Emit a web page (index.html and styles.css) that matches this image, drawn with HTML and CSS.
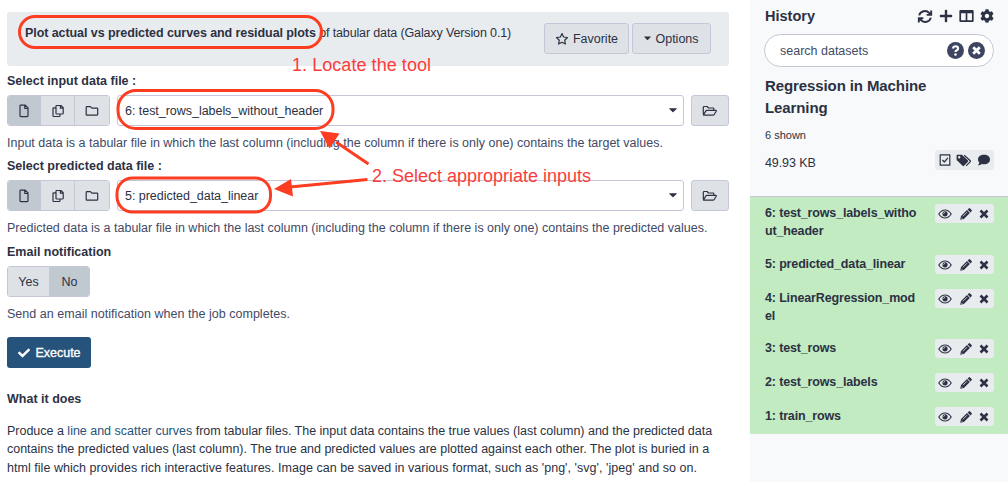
FILE: index.html
```html
<!DOCTYPE html>
<html lang="en">
<head>
<meta charset="utf-8">
<title>Galaxy</title>
<link rel="stylesheet" href="styles.css">
</head>
<body>
<svg class="defs" width="0" height="0">
  <symbol id="file" viewBox="0 0 12 14"><path class="line" d="M2.2 1.2H7.2L10 4V11.8Q10 12.6 9.2 12.6H2.8Q2 12.6 2 11.8V1.9Q2 1.2 2.8 1.2M6.8 1.4V4.5H9.9"/></symbol>
  <symbol id="copy" viewBox="0 0 14 14"><path class="line" d="M5.7 1.5H10L12.2 3.6V9.2Q12.2 10 11.4 10H5.7Q5 10 5 9.2V2.2Q5 1.5 5.7 1.5M9.4 1.5V4.2H12.2M4.8 3.9H2.7Q2 3.9 2 4.6V11.8Q2 12.5 2.7 12.5H8.2Q9 12.5 9 11.8V10.2"/></symbol>
  <symbol id="folder" viewBox="0 0 14 12"><path class="line" d="M2 1.6H5.4L6.9 3.1H11.9Q12.7 3.1 12.7 3.9V9.4Q12.7 10.2 11.9 10.2H2Q1.2 10.2 1.2 9.4V2.4Q1.2 1.6 2 1.6Z"/></symbol>
  <symbol id="folder-open" viewBox="0 0 16 12"><path class="line" d="M1.3 9.2V2.3Q1.3 1.5 2.1 1.5H5.1L6.5 3H11Q11.8 3 11.8 3.8V5.3M1.6 9.7L3.9 5.9Q4.3 5.3 5 5.3H13.7Q14.7 5.3 14.2 6.2L12.2 9.5Q11.8 10.2 11 10.2H2Q1.3 10.2 1.6 9.7Z"/></symbol>
  <symbol id="star" viewBox="0 0 14 14"><path class="line" d="M7 1.5L8.6 5L12.5 5.5L9.7 8.2L10.4 12L7 10.2L3.6 12L4.3 8.2L1.5 5.5L5.4 5Z"/></symbol>
  <symbol id="caret" viewBox="0 0 8 5"><path d="M.4 .3H7.6Q8 .5 7.6 .9L4.4 4.1Q4 4.5 3.6 4.1L.4 .9Q0 .5 .4 .3Z"/></symbol>
  <symbol id="check" viewBox="0 0 512 512"><path d="M173.898 439.404l-166.4-166.4c-9.997-9.997-9.997-26.206 0-36.204l36.203-36.204c9.997-9.998 26.207-9.998 36.204 0L192 312.69 432.095 72.596c9.997-9.997 26.207-9.997 36.204 0l36.203 36.204c9.997 9.997 9.997 26.206 0 36.204l-294.4 294.401c-9.998 9.997-26.207 9.997-36.204-.001z"/></symbol>
  <symbol id="refresh" viewBox="0 0 16 16"><path class="thick" d="M1.8 6.8A6.2 5.8 0 0 1 12.6 4.3L14 5.6M14.6 1.5V6.2H9.8M14.2 9.2A6.2 5.8 0 0 1 3.4 11.7L2 10.4M1.4 14.5V9.8H6.2"/></symbol>
  <symbol id="plus" viewBox="0 0 14 14"><path d="M5.8 1.5Q5.8 .8 6.5 .8H7.5Q8.2 .8 8.2 1.5V5.8H12.5Q13.2 5.8 13.2 6.5V7.5Q13.2 8.2 12.5 8.2H8.2V12.5Q8.2 13.2 7.5 13.2H6.5Q5.8 13.2 5.8 12.5V8.2H1.5Q.8 8.2 .8 7.5V6.5Q.8 5.8 1.5 5.8H5.8Z"/></symbol>
  <symbol id="columns" viewBox="0 0 16 14"><path fill-rule="evenodd" d="M1.5 .7H14.5Q15.6 .7 15.6 1.8V12.2Q15.6 13.3 14.500 13.3H1.5Q.4 13.3 .4 12.2V1.8Q.4 .7 1.5 .7ZM2.2 4V11.5H7.1V4ZM8.9 4V11.5H13.8V4Z"/></symbol>
  <symbol id="cog" viewBox="0 0 512 512"><path d="M487.4 315.7l-42.6-24.6c4.3-23.2 4.3-47 0-70.2l42.6-24.6c4.9-2.8 7.1-8.6 5.5-14-11.1-35.6-30-67.8-54.7-94.6-3.8-4.1-10-5.1-14.8-2.3L380.8 110c-17.9-15.4-38.5-27.3-60.8-35.1V25.8c0-5.6-3.9-10.5-9.4-11.7-36.7-8.2-74.3-7.8-109.2 0-5.5 1.2-9.4 6.1-9.4 11.7V75c-22.2 7.9-42.8 19.8-60.8 35.1L88.7 85.5c-4.9-2.8-11-1.9-14.8 2.3-24.7 26.7-43.6 58.9-54.7 94.6-1.7 5.4.6 11.2 5.5 14L67.3 221c-4.3 23.2-4.3 47 0 70.2l-42.6 24.6c-4.9 2.8-7.1 8.6-5.5 14 11.1 35.6 30 67.8 54.7 94.6 3.8 4.1 10 5.1 14.8 2.3l42.6-24.6c17.9 15.4 38.5 27.3 60.8 35.1v49.2c0 5.6 3.9 10.5 9.4 11.7 36.7 8.2 74.3 7.8 109.2 0 5.500-1.200 9.400-6.100 9.400-11.700v-49.200c22.200-7.900 42.800-19.800 60.800-35.100l42.600 24.600c4.900 2.800 11 1.900 14.800-2.300 24.700-26.700 43.600-58.900 54.700-94.600 1.500-5.500-.7-11.300-5.600-14.100zM256 336c-44.100 0-80-35.900-80-80s35.900-80 80-80 80 35.900 80 80-35.900 80-80 80z"/></symbol>
  <symbol id="help" viewBox="0 0 16 16"><circle cx="8" cy="8" r="8"/><path class="knock" d="M5.5 6.2Q6 4 8 4Q10.4 4 10.4 6Q10.4 7.2 9.2 7.8Q8 8.4 8 9.3"/><circle class="dot" cx="8" cy="11.8" r="1.2"/></symbol>
  <symbol id="clear" viewBox="0 0 16 16"><circle cx="8" cy="8" r="8"/><path class="knock wide" d="M4.900 4.900L11.100 11.100M11.100 4.900L4.900 11.100"/></symbol>
  <symbol id="checkbox" viewBox="0 0 12 12"><path class="line" d="M1.2 .8H10.8V11.2H1.2ZM3.4 6L5.3 8L8.9 3.8"/></symbol>
  <symbol id="tags" viewBox="0 0 16 13"><path fill-rule="evenodd" d="M1.1 .7H5.9L12 6.6Q12.6 7.2 12 7.8L8 11.8Q7.3 12.5 6.6 11.8L.6 5.9V1.3Q.6 .7 1.1 .7ZM3.2 2A1.2 1.2 0 1 0 3.2 4.4A1.2 1.2 0 1 0 3.2 2Z"/><path class="line" d="M8.2 1.2L14.3 6.8Q14.7 7.2 14.3 7.6L10.2 11.9"/></symbol>
  <symbol id="comment" viewBox="0 0 14 12"><path d="M7 .7C10.6 .7 13 2.7 13 5.4S10.6 10.2 7 10.2Q5.8 10.2 4.8 9.9Q3.3 11.3 1 11.4Q2.3 9.9 2.3 8.6Q1 7.3 1 5.4C1 2.7 3.4 .7 7 .7Z"/></symbol>
  <symbol id="eye" viewBox="0 0 14 10"><path class="line" d="M.8 5Q3.3 1 7 1T13.2 5Q10.7 9 7 9T.8 5Z"/><circle cx="7" cy="4.8" r="2.6"/><path class="glint" d="M5.6 4.8Q5.6 3.5 6.9 3.4"/></symbol>
  <symbol id="pencil" viewBox="0 0 12 12"><path d="M.2 11.8L1 8.100L7 2.100L9.900 5L3.900 11ZM7.600 1.500L8.700 .4Q9.400 -.2 10.100 .4L11.600 1.900Q12.200 2.600 11.600 3.300L10.500 4.400Z"/><path class="glint" d="M2.900 8.300L7 4.200M1.300 9.800L2.300 10.800"/></symbol>
  <symbol id="times" viewBox="0 0 10 10"><path class="cross" d="M1.500 1.500L8.500 8.500M8.500 1.500L1.500 8.500"/></symbol>
</svg>

<div class="app">
  <main class="tool">
    <header class="tool-head">
      <p class="tool-title"><b>Plot actual vs predicted curves and residual plots</b> <span>of tabular data (Galaxy Version 0.1)</span></p>
      <div class="tool-actions">
        <button class="btn favorite"><svg width="14" height="14"><use href="#star"/></svg><span>Favorite</span></button>
        <button class="btn options"><svg width="7" height="5"><use href="#caret"/></svg><span>Options</span></button>
      </div>
    </header>

    <section class="field">
      <h2 class="label">Select input data file :</h2>
      <div class="controls">
        <div class="group">
          <button class="seg on"><svg width="12" height="14"><use href="#file"/></svg></button>
          <button class="seg"><svg width="14" height="14"><use href="#copy"/></svg></button>
          <button class="seg"><svg width="14" height="12"><use href="#folder"/></svg></button>
        </div>
        <div class="select"><span>6: test_rows_labels_without_header</span><svg width="8" height="5"><use href="#caret"/></svg></div>
        <button class="btn browse"><svg width="16" height="12"><use href="#folder-open"/></svg></button>
      </div>
      <p class="help">Input data is a tabular file in which the last column (including the column if there is only one) contains the target values.</p>
    </section>

    <section class="field">
      <h2 class="label">Select predicted data file :</h2>
      <div class="controls">
        <div class="group">
          <button class="seg on"><svg width="12" height="14"><use href="#file"/></svg></button>
          <button class="seg"><svg width="14" height="14"><use href="#copy"/></svg></button>
          <button class="seg"><svg width="14" height="12"><use href="#folder"/></svg></button>
        </div>
        <div class="select"><span>5: predicted_data_linear</span><svg width="8" height="5"><use href="#caret"/></svg></div>
        <button class="btn browse"><svg width="16" height="12"><use href="#folder-open"/></svg></button>
      </div>
      <p class="help">Predicted data is a tabular file in which the last column (including the column if there is only one) contains the predicted values.</p>
    </section>

    <section class="field email">
      <h2 class="label">Email notification</h2>
      <div class="controls">
        <div class="group">
          <button class="seg yes">Yes</button>
          <button class="seg no on">No</button>
        </div>
      </div>
      <p class="help">Send an email notification when the job completes.</p>
    </section>

    <button class="execute"><svg width="12" height="12"><use href="#check"/></svg><span>Execute</span></button>

    <h2 class="label about">What it does</h2>
    <div class="description">
      <p>Produce a <a>line and scatter curves</a> from tabular files. The input data contains the true values (last column) and the predicted data</p>
      <p>contains the predicted values (last column). The true and predicted values are plotted against each other. The plot is buried in a</p>
      <p class="last">html file which provides rich interactive features. Image can be saved in various format, such as 'png', 'svg', 'jpeg' and so on.</p>
    </div>
  </main>

  <aside class="history">
    <div class="history-head">
      <h2>History</h2>
      <div class="history-icons">
        <svg width="16" height="15"><use href="#refresh"/></svg>
        <svg width="14" height="14"><use href="#plus"/></svg>
        <svg width="15" height="14"><use href="#columns"/></svg>
        <svg width="14" height="14"><use href="#cog"/></svg>
      </div>
    </div>
    <div class="search"><span>search datasets</span><svg width="17" height="17"><use href="#help"/></svg><svg width="17" height="17"><use href="#clear"/></svg></div>
    <h3 class="history-name">Regression in Machine<br>Learning</h3>
    <p class="shown">6 shown</p>
    <div class="size-row">
      <span>49.93 KB</span>
      <div class="tools"><svg width="12" height="12"><use href="#checkbox"/></svg><svg width="16" height="13"><use href="#tags"/></svg><svg width="14" height="12"><use href="#comment"/></svg></div>
    </div>
    <ul class="datasets">
      <li class="two"><b>6: test_rows_labels_witho<br>ut_header</b><div class="tools"><svg width="14" height="10"><use href="#eye"/></svg><svg width="12" height="12"><use href="#pencil"/></svg><svg width="10" height="10"><use href="#times"/></svg></div></li>
      <li><b>5: predicted_data_linear</b><div class="tools"><svg width="14" height="10"><use href="#eye"/></svg><svg width="12" height="12"><use href="#pencil"/></svg><svg width="10" height="10"><use href="#times"/></svg></div></li>
      <li class="two snug"><b>4: LinearRegression_mod<br>el</b><div class="tools"><svg width="14" height="10"><use href="#eye"/></svg><svg width="12" height="12"><use href="#pencil"/></svg><svg width="10" height="10"><use href="#times"/></svg></div></li>
      <li><b>3: test_rows</b><div class="tools"><svg width="14" height="10"><use href="#eye"/></svg><svg width="12" height="12"><use href="#pencil"/></svg><svg width="10" height="10"><use href="#times"/></svg></div></li>
      <li><b>2: test_rows_labels</b><div class="tools"><svg width="14" height="10"><use href="#eye"/></svg><svg width="12" height="12"><use href="#pencil"/></svg><svg width="10" height="10"><use href="#times"/></svg></div></li>
      <li><b>1: train_rows</b><div class="tools"><svg width="14" height="10"><use href="#eye"/></svg><svg width="12" height="12"><use href="#pencil"/></svg><svg width="10" height="10"><use href="#times"/></svg></div></li>
    </ul>
  </aside>

  <svg class="notes" width="1008" height="482" viewBox="0 0 1008 482">
    <rect x="19.5" y="16.5" width="302" height="31" rx="15.5"/>
    <rect x="118" y="90.5" width="215" height="38" rx="18"/>
    <rect x="117" y="178" width="153.500" height="34" rx="15.500"/>
    <path d="M368.500 164L336 142M367.500 179.500L290 187"/>
    <path class="tip" d="M320 131L339.500 133.500L329.500 148.500ZM274 189L291 179L293 196.500Z"/>
    <text x="292" y="71" textLength="139">1. Locate the tool</text>
    <text x="372" y="182" textLength="219">2. Select appropriate inputs</text>
  </svg>
</div>
</body>
</html>
```
FILE: styles.css
```css
* { box-sizing: border-box; }
body {
  margin: 0;
  background: #fff;
  color: #2c3143;
  font: 12.5px/18px "Liberation Sans", Arial, sans-serif;
}
h2, h3, p, ul { margin: 0; padding: 0; }
button { font: inherit; color: inherit; margin: 0; padding: 0; }
svg { display: block; flex: none; fill: #2c3143; }
.defs { position: absolute; }
.line { fill: none; stroke: #2c3143; stroke-width: 1.2; stroke-linejoin: round; }
.thick { fill: none; stroke: #2c3143; stroke-width: 2; }
.knock { fill: none; stroke: #fff; stroke-width: 2; }
.wide { stroke-width: 2.6; }
.dot { fill: #fff; }
.glint { fill: none; stroke: #e9ecef; stroke-width: .8; }
.cross { fill: none; stroke: #2c3143; stroke-width: 2.6; }

.app { position: relative; display: flex; width: 1008px; height: 482px; overflow: hidden; }

.tool { width: 750px; padding: 12px 21px 0 7px; white-space: nowrap; }
.tool-head {
  display: flex;
  justify-content: space-between;
  height: 54px;
  padding: 11px 18px 0 18px;
  margin-bottom: 6px;
  background: #e9ecef;
  border-radius: 3px;
}
.tool-title { line-height: 20px; letter-spacing: -.13px; }
.tool-title b { letter-spacing: -.075px; }
.tool-actions { display: flex; gap: 3px; }
.btn {
  display: flex;
  align-items: center;
  justify-content: center;
  height: 31px;
  background: #dee2e6;
  border: 1px solid #c5c7d9;
  border-radius: 3px;
}
.favorite { width: 85px; gap: 4px; }
.options { width: 79px; gap: 4px; }
.browse { width: 38px; }

.field { height: 85px; }
.label { font-size: 12.5px; line-height: 18px; font-weight: bold; margin-bottom: 5px; }
.controls { display: flex; height: 31px; }
.group {
  display: flex;
  border: 1px solid #c5c7d9;
  border-radius: 3px;
  overflow: hidden;
  margin-right: 7px;
}
.seg {
  display: flex;
  align-items: center;
  justify-content: center;
  width: 34px;
  background: #dee2e6;
  border: 0;
  border-left: 1px solid #c5c7d9;
}
.seg:first-child { width: 32px; border-left: 0; }
.seg:last-child { width: 35px; }
.seg.on { background: #c1c9d0; }
.group .yes { width: 41px; }
.group .no { width: 40px; }
.select {
  display: flex;
  flex: 1;
  align-items: center;
  justify-content: space-between;
  padding: 0 6px 0 7px;
  margin-right: 7px;
  border: 1px solid #c5c7d9;
  border-radius: 3px;
  letter-spacing: -.035px;
}
.help { margin-top: 8px; color: #424a66; }
.email { padding-top: 1px; }
.email .help { letter-spacing: .03px; }

.execute {
  display: flex;
  align-items: center;
  justify-content: center;
  gap: 5px;
  width: 84px;
  height: 31px;
  margin-top: 10px;
  padding-left: 1px;
  border: 0;
  border-radius: 3px;
  background: #25537b;
  color: #fff;
  -webkit-text-stroke: .35px #fff;
}
.execute svg { fill: #fff; }
.about { margin: 22px 0 14px; }
.description { line-height: 18.4px; letter-spacing: -.01px; }
.description .last { letter-spacing: .04px; }
.description a { color: #25537b; }

.history { width: 258px; background: #f8f9fa; white-space: nowrap; }
.history-head { display: flex; justify-content: space-between; align-items: center; height: 34px; padding: 0 14px 2px 15px; }
.history-head h2 { font-size: 14.5px; }
.history-icons { display: flex; align-items: center; gap: 6px; }
.search {
  display: flex;
  align-items: center;
  gap: 4px;
  height: 33px;
  margin: 0 14px;
  padding: 0 8px 0 15px;
  border: 1px solid #c5c7d9;
  border-radius: 17px;
  background: #fff;
  color: #424a66;
}
.search span { flex: 1; }
.search svg { fill: #3e4560; }
.history-name { margin: 8px 0 0 15px; font-size: 15px; line-height: 22px; letter-spacing: -.1px; }
.shown { margin: 7px 0 0 15px; font-size: 11px; line-height: 18px; }
.size-row { display: flex; justify-content: space-between; height: 20px; margin: 6px 14px 0 15px; }
.size-row > span { padding-top: 4px; letter-spacing: -.1px; }
.tools {
  display: flex;
  align-items: center;
  justify-content: space-between;
  width: 59px;
  height: 19px;
  padding: 0 5px 0 3px;
  border-radius: 3px;
  background: #e9ecef;
}
.size-row .tools { height: 20px; padding: 0 3px 0 4px; }
.datasets { list-style: none; margin-top: 26px; border-top: 1px solid #c5c7d9; background: #c2ebc2; }
.datasets li { display: flex; justify-content: space-between; height: 34px; padding: 7px 14px 0 15px; line-height: 18px; letter-spacing: -.15px; }
.datasets li.two { height: 51px; }
.datasets li.snug { height: 50px; }

.notes { position: absolute; left: 0; top: 0; }
.notes rect, .notes path { fill: none; stroke: #fc3d21; stroke-width: 3; }
.notes .tip { fill: #fc3d21; stroke: none; }
.notes text { fill: #fb3c3c; font-size: 18px; }
```
